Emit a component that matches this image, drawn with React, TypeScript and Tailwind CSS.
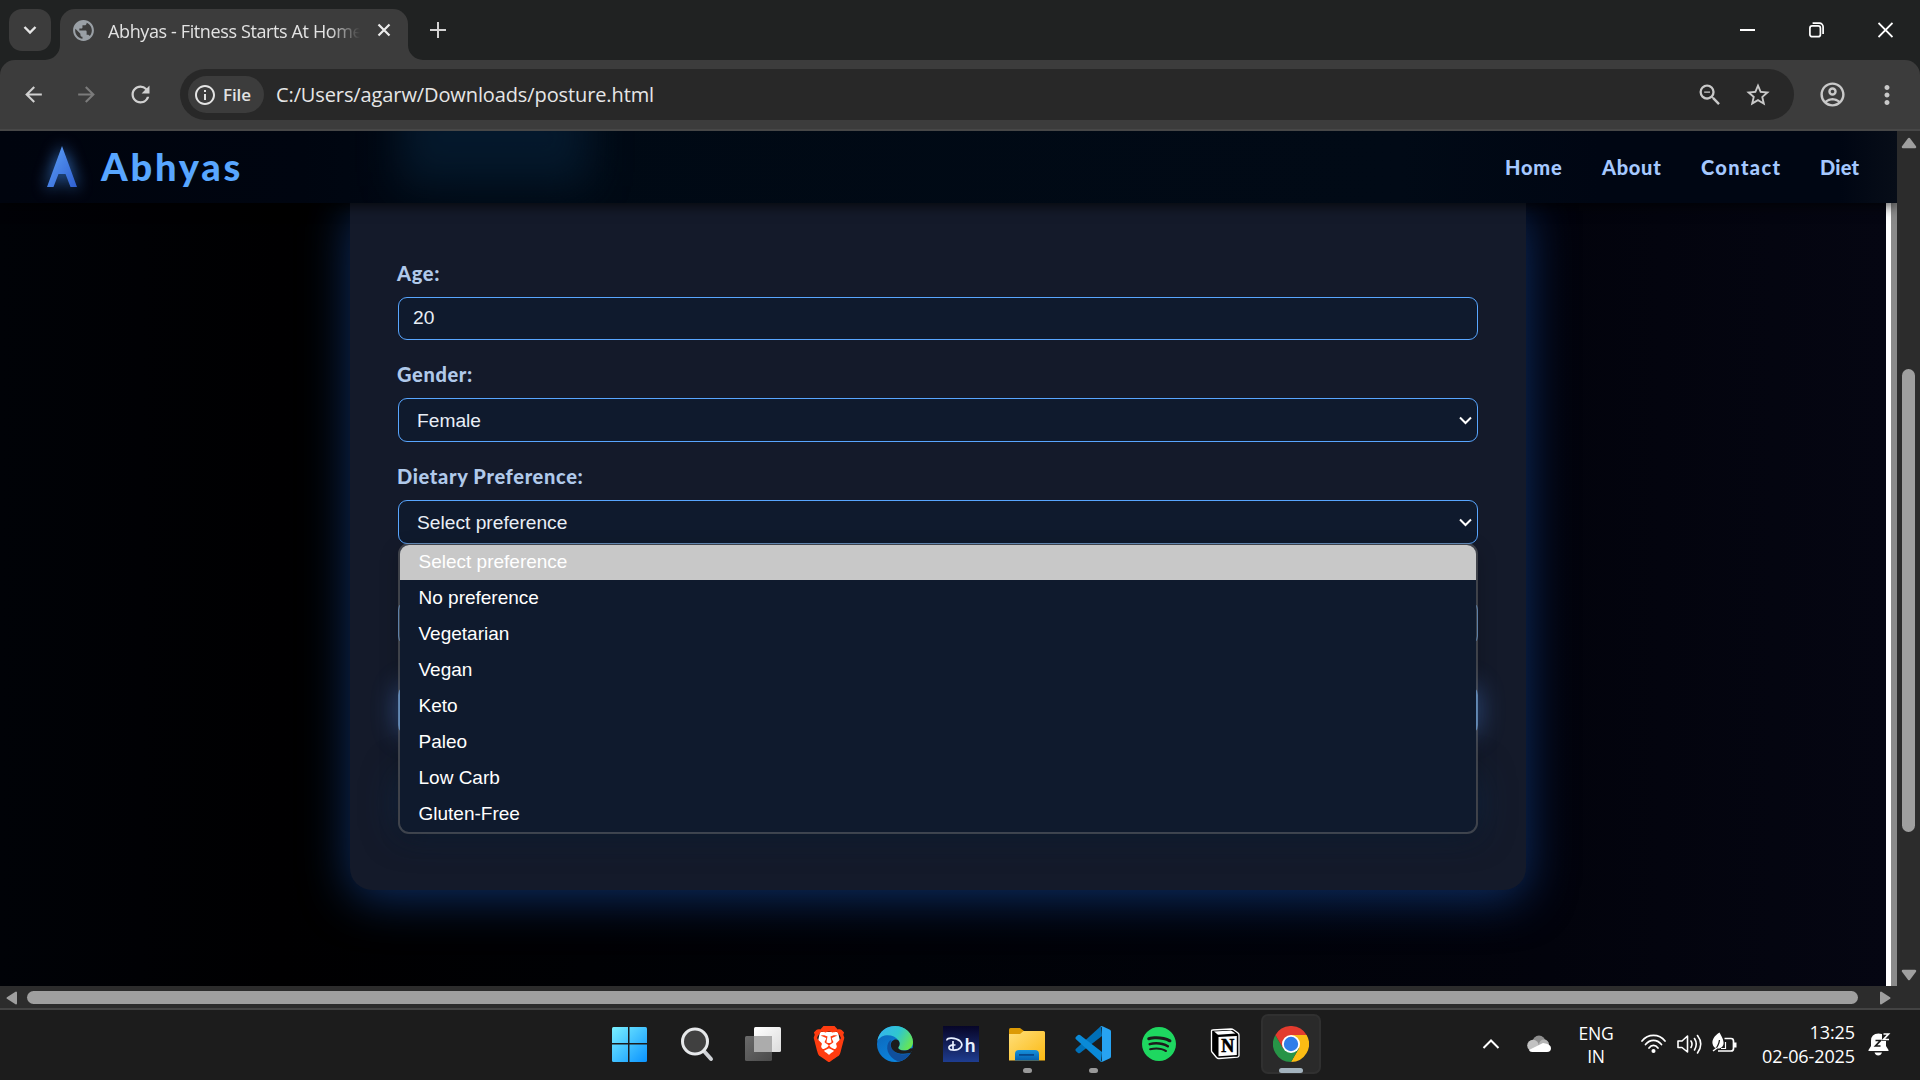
import React from "react";
import {
  MdArrowBack,
  MdArrowForward,
  MdInfoOutline,
  MdMoreVert,
  MdOutlineAccountCircle,
  MdOutlineZoomOut,
  MdPublic,
  MdRefresh,
  MdStarBorder,
} from "react-icons/md";
import { SiBrave, SiSpotify } from "react-icons/si";

const UI = "font-['Open_Sans','Noto_Sans',sans-serif]";
const BRAND = "font-['Lato','Open_Sans',sans-serif]";

function TabStrip() {
  return (
    <div className="flex h-[60px] shrink-0 bg-[#202222] pl-[9px]">
      <button className="mt-[9px] flex h-[42px] w-[42px] items-center justify-center rounded-[13px] bg-[#3c3c3c]">
        <svg width="14" height="10" viewBox="0 0 14 10" fill="none" stroke="#e6e6e6" strokeWidth="2.4">
          <path d="M1.5 2 L7 7.5 L12.500 2" />
        </svg>
      </button>
      <div className="relative mt-[9px] ml-[9px] flex h-[51px] w-[348px] items-center rounded-t-[15px] bg-[#3c3c3c] pl-[12px]">
        <svg className="absolute bottom-0 -left-[15px]" width="15" height="15">
          <path d="M15 0 A15 15 0 0 1 0 15 H15 Z" fill="#3c3c3c" />
        </svg>
        <svg className="absolute -right-[15px] bottom-0" width="15" height="15">
          <path d="M0 0 A15 15 0 0 0 15 15 H0 Z" fill="#3c3c3c" />
        </svg>
        <MdPublic size={25} color="#9aa0a6" className="-mt-[9px] -ml-px" />
        <div
          className={`${UI} -mt-[7px] ml-[12px] w-[252px] overflow-hidden text-[18px] leading-[26px] tracking-[-0.380px] whitespace-nowrap text-[#e3e3e3] [mask-image:linear-gradient(to_right,black_88%,transparent)]`}
        >
          Abhyas - Fitness Starts At Home
        </div>
        <svg className="-mt-[9px] ml-[17px]" width="14" height="14" viewBox="0 0 14 14" stroke="#ececec" strokeWidth="2.2">
          <path d="M1.500 1.500 L12.500 12.500 M12.500 1.500 L1.500 12.500" />
        </svg>
      </div>
      <svg className="mt-[22px] ml-[22px]" width="16" height="16" viewBox="0 0 16 16" stroke="#d3d3d3" strokeWidth="2">
        <path d="M8 0 V16 M0 8 H16" />
      </svg>
      <div className="ml-auto flex h-[59px] items-center pr-[27px]">
        <svg width="15" height="16" viewBox="0 0 15 16" className="mr-[54px]">
          <rect y="7" width="15" height="2" fill="#fff" />
        </svg>
        <svg width="15" height="16" viewBox="0 0 15 16" fill="none" stroke="#fff" strokeWidth="1.700" className="mr-[54px]">
          <rect x="0.900" y="3.900" width="10.500" height="10.800" rx="2.300" />
          <path d="M3.600 1.200 H10.500 A3.600 3.600 0 0 1 14.100 4.800 V12" />
        </svg>
        <svg width="15" height="16" viewBox="0 0 15 16" stroke="#fff" strokeWidth="1.800">
          <path d="M0.500 1 L14.500 15 M14.500 1 L0.500 15" />
        </svg>
      </div>
    </div>
  );
}

function Toolbar() {
  return (
    <div className="h-[71px] shrink-0 bg-[#202222]">
      <div className="flex h-[71px] items-center rounded-t-[15px] border-b-2 border-[#474747] bg-[#3c3c3c] pl-[21px]">
        <MdArrowBack size={25} color="#d0d0d0" />
        <MdArrowForward size={25} color="#7b7b7b" className="ml-[28px]" />
        <MdRefresh size={27} color="#d0d0d0" className="ml-[28px]" />
        <div className="ml-[26px] flex h-[51px] w-[1614px] items-center rounded-full bg-[#282828] pr-[22px] pl-[8px]">
          <div className="flex h-[37px] w-[76px] items-center rounded-full bg-[#3c3c3c] pl-[5px]">
            <MdInfoOutline size={24} color="#e3e3e3" />
            <span className={`${UI} ml-[6px] text-[17px] font-semibold tracking-[-0.100px] text-[#e3e3e3]`}>File</span>
          </div>
          <span className={`${UI} ml-[12px] text-[20px] tracking-[-0.110px] whitespace-nowrap text-[#e6e6e6]`}>
            C:/Users/agarw/Downloads/posture.html
          </span>
          <MdOutlineZoomOut size={28} color="#c9c9c9" className="ml-auto" />
          <MdStarBorder size={28} color="#c9c9c9" className="ml-[20px]" />
        </div>
        <MdOutlineAccountCircle size={29} color="#c9c9c9" className="ml-[24px]" />
        <MdMoreVert size={30} color="#c9c9c9" className="ml-[25px]" />
      </div>
    </div>
  );
}

function SiteHeader() {
  return (
    <header className="relative z-10 flex h-[72px] w-[1897px] shrink-0 items-center bg-[linear-gradient(to_right,#00040e_0px,#000510_300px,#000914_480px,#010a16_1400px,#000613_1600px,#000613_1840px,#070d18_1897px)] pl-[46px] shadow-[0_3px_12px_rgba(0,0,0,0.7)]">
      <div className="absolute top-0 left-0 h-full w-full overflow-hidden">
        <div className="absolute -top-[40px] left-[400px] h-[95px] w-[190px] bg-[linear-gradient(#08203a,#061e32)] opacity-70 blur-[20px]" />
      </div>
      <svg
        width="32"
        height="42"
        viewBox="0 0 32 42"
        className="relative overflow-visible drop-shadow-[0_0_8px_rgba(70,150,255,0.8)]"
      >
        <defs>
          <linearGradient id="mark" x1="0" y1="0" x2="1" y2="1">
            <stop offset="0" stopColor="#5ea2f8" />
            <stop offset="1" stopColor="#2f5fd0" />
          </linearGradient>
        </defs>
        <path d="M16 0 L31 41 H24.500 L19.500 28 H12.500 L7.500 41 H1 Z" fill="url(#mark)" />
      </svg>
      <div className={`${BRAND} relative -mt-[3px] ml-[23px] text-[38px] leading-none font-black tracking-[2.800px] text-[#58a6ff]`}>Abhyas</div>
      <nav className={`${BRAND} relative mr-[38px] ml-auto flex gap-[39px] text-[20px] font-black text-[#a5c8ff]`}>
        <a className="w-[58px] tracking-[0.800px]">Home</a>
        <a className="w-[60px] tracking-[0.700px]">About</a>
        <a className="w-[80px] tracking-[1.400px]">Contact</a>
        <a className="w-[39px] tracking-[0.200px]">Diet</a>
      </nav>
    </header>
  );
}

function Label({ children }: { children: React.ReactNode }) {
  return <div className={`${BRAND} -ml-px mb-[9px] h-[30px] text-[20px] leading-[30px] font-black tracking-[0.660px] text-[#b0c9ea]`}>{children}</div>;
}

function Select({ value, children }: { value: string; children?: React.ReactNode }) {
  return (
    <div className="relative mb-[19px] flex h-[44px] items-center justify-between rounded-[9px] border border-[#58a6ff] bg-[#0f1a2d] pr-[5px] pl-[18px] font-['Liberation_Sans',sans-serif] text-[19.200px] text-[#e8eef6]">
      <span className="relative top-px">{value}</span>
      <svg width="13" height="9" viewBox="0 0 13 9" fill="none" stroke="#fff" strokeWidth="2">
        <path d="M1 1.500 L6.500 7 L12 1.500" />
      </svg>
      {children}
    </div>
  );
}

const OPTIONS = ["Select preference", "No preference", "Vegetarian", "Vegan", "Keto", "Paleo", "Low Carb", "Gluten-Free"];

function OptionMenu() {
  return (
    <div className="absolute top-[42px] -left-px z-10 h-[291px] w-[1080px] overflow-hidden rounded-[11px] border-2 border-[#6b6b6b]/50 bg-[#0f1a2d] bg-clip-padding text-[19px] text-white shadow-[0_6px_20px_rgba(0,0,0,0.2)]">
      {OPTIONS.map((option, i) => (
        <div key={option} className={i === 0 ? "h-[35px] bg-[#c8c8c8] pl-[18.500px] leading-[33px]" : "h-[36px] pl-[18.500px] leading-[35px]"}>
          {option}
        </div>
      ))}
    </div>
  );
}

function Page() {
  return (
    <div className="flex h-[855px] w-[1897px] flex-col overflow-hidden">
      <SiteHeader />
      <div className="flex min-h-0 flex-1">
        <main className="w-[1886px] overflow-hidden bg-[linear-gradient(to_right,#000207_0px,#000001_280px,#000207_900px,#02030c_1550px,#050612_1886px)]">
          <section className="ml-[350px] h-[687px] w-[1176px] rounded-b-[22px] bg-[#141a2a] px-[48px] pt-[55px] shadow-[0_8px_48px_rgba(24,84,180,0.54)]">
            <Label>Age:</Label>
            <div className="mb-[19px] flex h-[43px] items-center rounded-[9px] border border-[#58a6ff] bg-[#0f1a2d] pl-[14px] font-['Liberation_Sans',sans-serif] text-[19.200px] text-[#e8eef6]">
              <span className="relative">20</span>
            </div>
            <Label>Gender:</Label>
            <Select value="Female" />
            <Label>Dietary Preference:</Label>
            <Select value="Select preference">
              <OptionMenu />
            </Select>
            <div className="mt-[57px] h-[44px] rounded-[9px] border border-[#58a6ff] bg-[#0f1a2d]" />
            <div className="mt-[40px] h-[50px] rounded-[10px] bg-[#58a6ff] shadow-[0_0_26px_rgba(88,150,255,0.45)]" />
            <div className="mt-[34px] h-[60px] rounded-[10px] shadow-[0_4px_34px_rgba(16,50,85,0.55)]" />
          </section>
        </main>
        <div className="w-[5px] bg-white" />
        <div className="w-[6px] bg-[#8a8a8a]" />
      </div>
    </div>
  );
}

function VerticalScrollbar() {
  return (
    <div className="flex h-[855px] w-[23px] flex-col items-center bg-[#2c2c2c]">
      <svg className="mt-[6px]" width="16" height="12" viewBox="0 0 16 12">
        <path d="M8 2 L14 10 H2 Z" fill="#9f9f9f" stroke="#9f9f9f" strokeWidth="2.500" strokeLinejoin="round" />
      </svg>
      <div className="mt-[220px] h-[463px] w-[13px] rounded-full bg-[#9f9f9f]" />
      <svg className="mt-[137px]" width="16" height="12" viewBox="0 0 16 12">
        <path d="M8 10 L14 2 H2 Z" fill="#9f9f9f" stroke="#9f9f9f" strokeWidth="2.500" strokeLinejoin="round" />
      </svg>
    </div>
  );
}

function HorizontalScrollbar() {
  return (
    <div className="flex h-[24px] shrink-0 items-center border-b-2 border-[#434343] bg-[#2c2c2c] pt-px pl-[6px]">
      <svg width="12" height="14" viewBox="0 0 12 14">
        <path d="M1.500 7 L10 1.500 V12.500 Z" fill="#9f9f9f" stroke="#9f9f9f" strokeWidth="2" strokeLinejoin="round" />
      </svg>
      <div className="ml-[9px] h-[13px] w-[1831px] rounded-full bg-[#9f9f9f]" />
      <svg className="ml-[21px]" width="12" height="14" viewBox="0 0 12 14">
        <path d="M10.500 7 L2 1.500 V12.500 Z" fill="#9f9f9f" stroke="#9f9f9f" strokeWidth="2" strokeLinejoin="round" />
      </svg>
    </div>
  );
}

function WindowsIcon() {
  return (
    <svg width="36" height="36" viewBox="0 0 36 36">
      <defs>
        <linearGradient id="win" gradientUnits="userSpaceOnUse" x1="0" y1="0" x2="36" y2="36">
          <stop offset="0" stopColor="#7df3ff" />
          <stop offset="1" stopColor="#0a93ff" />
        </linearGradient>
      </defs>
      <g fill="url(#win)">
        <path d="M2.500 1 H17 V17 H1 V2.500 Q1 1 2.500 1Z" />
        <path d="M18.500 1 H34.500 Q36 1 36 2.500 V17 H18.500Z" />
        <path d="M1 18.500 H17 V36 H2.500 Q1 36 1 34.500Z" />
        <path d="M18.500 18.500 H36 V34.500 Q36 36 34.500 36 H18.500Z" />
      </g>
    </svg>
  );
}

function SearchIcon() {
  return (
    <svg width="36" height="36" viewBox="0 0 36 36">
      <path d="M24 24 L32 33" stroke="#cfd2d6" strokeWidth="4" strokeLinecap="round" />
      <circle cx="16" cy="15.500" r="12.500" fill="#404040" stroke="#e6e8ea" strokeWidth="3" />
    </svg>
  );
}

function TaskViewIcon() {
  return (
    <svg width="36" height="36" viewBox="0 0 36 36">
      <defs>
        <linearGradient id="tvf" x1="0" y1="0" x2="1" y2="1">
          <stop offset="0" stopColor="#fff" />
          <stop offset="1" stopColor="#dcdcdc" />
        </linearGradient>
        <linearGradient id="tvb" x1="0" y1="0" x2="1" y2="1">
          <stop offset="0" stopColor="#6a6a6a" />
          <stop offset="1" stopColor="#4a4a4a" />
        </linearGradient>
      </defs>
      <rect x="0" y="10" width="27" height="25" rx="1.500" fill="url(#tvb)" />
      <rect x="9" y="1" width="27" height="25" rx="1.500" fill="url(#tvf)" />
      <path d="M9 10 H27 V26 H9 Z" fill="#acacac" />
    </svg>
  );
}

function BraveIcon() {
  return (
    <div className="relative flex h-[36px] w-[36px] items-center justify-center">
      <svg className="absolute" width="36" height="36" viewBox="0 0 36 36">
        <path d="M9 6 H27 L29 15 L25 26 L18 32 L11 26 L7 15Z" fill="#fff" />
      </svg>
      <SiBrave size={36} color="#ff3c10" className="relative" />
    </div>
  );
}

function EdgeIcon() {
  return (
    <svg width="36" height="36" viewBox="0 0 36 36">
      <defs>
        <linearGradient id="edgeTop" x1="0" y1="0.300" x2="1" y2="0.700">
          <stop offset="0" stopColor="#35b5ee" />
          <stop offset="0.500" stopColor="#2fc6cf" />
          <stop offset="1" stopColor="#6be84a" />
        </linearGradient>
        <linearGradient id="edgeLow" x1="0" y1="0" x2="0.600" y2="1">
          <stop offset="0" stopColor="#0c63b5" />
          <stop offset="1" stopColor="#0b86e0" />
        </linearGradient>
      </defs>
      <circle cx="18" cy="18" r="18" fill="url(#edgeLow)" />
      <path d="M0.300 15 C2 5 10 0 18 0 C28 0 36 7.500 36 16 C36 21 32 24.500 27 24.500 C22.500 24.500 20.500 22.500 21.500 21 C23 19 23 16.500 21.500 14.500 C17 8 5 7 0.300 15Z" fill="url(#edgeTop)" />
      <path d="M13 14.500 C7.500 20 10 31 21 35.500 C27 35 31.500 31 33.500 27 C25 30.500 15 27 13.500 19.500 C13.200 17.500 13.500 16 14.500 14Z" fill="#104f9c" />
      <path d="M21.500 14.500 C18 12 13.500 15 13.800 19.500 C14.500 26 22 29.500 33.500 27 L37 22 L33 22.500 C31 24.500 29 24.500 27 24.500 C22.500 24.500 20.500 22.500 21.500 21 C23 19 23 16.500 21.500 14.500Z" fill="#1c1c1c" />
    </svg>
  );
}

function HotstarIcon() {
  return (
    <div className="relative flex h-[36px] w-[36px] items-center justify-center bg-linear-to-b from-[#070628] to-[#1e3d90] font-['Lato',sans-serif] text-[19px] leading-none text-[#e8f0ff]">
      <svg className="absolute top-0 left-0" width="36" height="36" viewBox="0 0 36 36" fill="none" stroke="#e8f0ff" strokeWidth="1.700">
        <path d="M4 14.500 C3 11 13 11.500 17 15 C21.500 19.500 17 25 9 24 C4 23.500 5 18 12.500 19 M10 15 V25" />
      </svg>
      <span className="pl-[18px] font-bold">h</span>
    </div>
  );
}

function ExplorerIcon() {
  return (
    <svg width="36" height="36" viewBox="0 0 36 36">
      <defs>
        <linearGradient id="fold" x1="0" y1="0" x2="1" y2="1">
          <stop offset="0" stopColor="#ffdf7a" />
          <stop offset="1" stopColor="#fbb912" />
        </linearGradient>
        <linearGradient id="tray" x1="0" y1="0" x2="0" y2="1">
          <stop offset="0" stopColor="#1792dc" />
          <stop offset="1" stopColor="#0460b0" />
        </linearGradient>
      </defs>
      <path d="M0 3.500 Q0 2 1.500 2 H11 L15 5 V10 H0Z" fill="#dc9a05" />
      <path d="M0 8 H11 L14.500 5 H34.500 Q36 5 36 6.500 V34.500 H0Z" fill="url(#fold)" />
      <path d="M6 34.500 V28 Q6 24 10 24 H26 Q30 24 30 28 V34.500Z" fill="url(#tray)" />
      <rect x="10" y="28" width="15" height="1.800" fill="#07498c" />
    </svg>
  );
}

function CodeIcon() {
  return (
    <svg width="36" height="36" viewBox="0 0 36 36">
      <path d="M26 0 L0.700 23 Q0 24 0.800 25 L3 27 Q4 27.500 5 27 L27 10Z" fill="#0070b8" />
      <path d="M26 36 L0.700 13 Q0 12 0.800 11 L3 9 Q4 8.500 5 9 L27 26Z" fill="#0a8ad8" />
      <path d="M25.500 0.500 Q26.500 -0.300 28 0.400 L35 3.800 Q36 4.300 36 5.500 V30.500 Q36 31.700 35 32.200 L28 35.600 Q26.500 36.300 25.500 35.500 Q27 35.500 27 34 V2 Q27 0.500 25.500 0.500Z" fill="#27a3f2" />
    </svg>
  );
}

function NotionIcon() {
  return (
    <svg width="36" height="36" viewBox="0 0 36 36">
      <path d="M4.500 5 Q4.500 4 5.500 4 L24 3 Q25.500 3 26.500 3.700 L31 7 Q32 7.700 32 9 V29.500 Q32 31 30.500 31.200 L12 32.500 Q10.500 32.600 9.500 31.500 L5 26 Q4.500 25.300 4.500 24.500Z" fill="#000" stroke="#fff" strokeWidth="1.300" />
      <path d="M7 5.500 L24 4.400 L28.500 7.500 L11 8.700Z" fill="#fff" />
      <path d="M11.500 11 L29.800 9.900 V29 L11.500 30.300Z" fill="#fff" />
      <text x="20.700" y="26.300" textAnchor="middle" fontSize="18" fontWeight="700" fontFamily="Liberation Serif, serif" fill="#000" stroke="#000" strokeWidth="0.600">
        N
      </text>
    </svg>
  );
}

function ChromeIcon() {
  return (
    <svg width="36" height="36" viewBox="0 0 36 36">
      <path d="M18 18 L2.400 9 A18 18 0 0 1 33.600 9Z" fill="#e33b2e" />
      <path d="M18 9 H33.600 A18 18 0 0 1 18 36 L25.800 22.500Z" fill="#fbbc14" />
      <path d="M25.800 22.500 L18 36 A18 18 0 0 1 2.400 9 L10.200 22.500Z" fill="#279447" />
      <path d="M2.400 9 L10.200 22.500 L18 9Z" fill="#e33b2e" />
      <circle cx="18" cy="18" r="9" fill="#fff" />
      <circle cx="18" cy="18" r="7.200" fill="#2f7de9" />
    </svg>
  );
}

function TaskbarItem({ children, state }: { children: React.ReactNode; state?: "open" | "active" }) {
  return (
    <div
      className={
        state === "active"
          ? "relative mx-[3px] flex h-[60px] w-[60px] items-center justify-center rounded-[7px] border-2 border-[#303030] bg-[#2a2a2a]"
          : "relative mx-[3px] flex h-[60px] w-[60px] items-center justify-center"
      }
    >
      {children}
      {state === "open" && <div className="absolute bottom-[1px] h-[5px] w-[9px] rounded-full bg-[#999]" />}
      {state === "active" && <div className="absolute -bottom-px h-[5px] w-[24px] rounded-full bg-[#a3b3be]" />}
    </div>
  );
}

function Tray() {
  return (
    <div className={`${UI} -mt-[2px] ml-auto flex h-full items-center text-white`}>
      <svg width="18" height="12" viewBox="0 0 18 12" fill="none" stroke="#fff" strokeWidth="2">
        <path d="M1.500 10 L9 2.500 L16.500 10" />
      </svg>
      <svg className="ml-[26px]" width="26" height="18" viewBox="0 0 26 18">
        <circle cx="13" cy="7" r="6.500" fill="#8e8e8e" />
        <circle cx="7" cy="10.500" r="5.800" fill="#c2c2c2" />
        <circle cx="18" cy="9.500" r="5" fill="#b4b4b4" />
        <path d="M3 15 L17 8 Q25 9 25 13 Q25 17 21 17 H6 Q3.500 17 3 15Z" fill="#fff" />
      </svg>
      <div className="mt-px ml-[21px] w-[46px] text-center text-[17.500px] leading-[23px] tracking-[-0.200px]">
        ENG
        <br />
        IN
      </div>
      <svg className="ml-[22px]" width="25" height="20" viewBox="0 0 25 20" fill="none" stroke="#fff" strokeWidth="1.700" strokeLinecap="round">
        <path d="M1 7 C7 -0.500 18 -0.500 24 7" />
        <path d="M4.500 10.500 C9 5 16 5 20.500 10.500" />
        <path d="M8 14 C10.500 10.500 14.500 10.500 17 14" />
        <circle cx="12.500" cy="17" r="1.200" fill="#fff" />
      </svg>
      <svg className="ml-[11px]" width="25" height="20" viewBox="0 0 25 20" fill="none" stroke="#fff" strokeWidth="1.600" strokeLinecap="round" strokeLinejoin="round">
        <path d="M1 7 H5 L10.500 2 V18 L5 13.500 H1Z" />
        <path d="M14 7 Q16 10 14 13.500 M17.500 4.500 Q21 10 17.500 16 M20.500 1.500 Q27 10 20.500 19" />
      </svg>
      <svg className="-mt-[3px] ml-[10px]" width="25" height="22" viewBox="0 0 25 22" fill="none" stroke="#fff" strokeWidth="1.700">
        <path d="M12.500 6.500 H19 Q21.500 6.500 21.500 9 V16.500 Q21.500 19 19 19 H6" />
        <rect x="22" y="10.500" width="2.500" height="5" fill="#fff" stroke="none" />
        <path d="M13.500 10 V16.500 H9" strokeWidth="1.200" />
        <path d="M7.500 0.500 C2 4 0 8 0.500 11.500 C0.800 14.500 3 16.500 6 16.500 C9.500 16.500 12 14 11.500 10 C11 6 9 3.500 7.500 0.500Z" fill="#fff" stroke="none" />
        <path d="M7.500 8 C7 13 5 16 1 20" stroke="#1c1c1c" strokeWidth="1.300" />
        <path d="M1 19 L5 16" strokeWidth="1.500" />
      </svg>
      <div className="ml-[14px] w-[104px] text-right text-[18px] leading-[24px] tracking-[-0.100px] whitespace-nowrap">
        13:25
        <br />
        02-06-2025
      </div>
      <svg className="mr-[29px] ml-[13px]" width="23" height="24" viewBox="0 0 23 24">
        <path d="M3 9 Q3 1.500 10.500 1.500 Q18 1.500 18 9 V14 L20.500 18 V19 H0.500 V18 L3 14Z" fill="#fff" />
        <path d="M6.500 20.500 H14 Q13 23.500 10.200 23.500 Q7.500 23.500 6.500 20.500Z" fill="#fff" />
        <path d="M7.500 8.500 H12.500 L7.500 14 H12.500" fill="none" stroke="#1c1c1c" strokeWidth="1.700" />
        <path d="M14 1 H23 V9 H14Z" fill="#1c1c1c" />
        <path d="M15.500 2 H20.500 L15.500 7.500 H21" fill="none" stroke="#fff" strokeWidth="1.700" />
      </svg>
    </div>
  );
}

function Taskbar() {
  return (
    <div className="grid h-[70px] shrink-0 grid-cols-[598px_726px_1fr] items-center bg-[#1c1c1c]">
      <div />
      <div className="-mt-[2px] flex">
        <div className="-ml-[2px] mr-[2px]"><TaskbarItem><WindowsIcon /></TaskbarItem></div>
        <TaskbarItem><SearchIcon /></TaskbarItem>
        <TaskbarItem><TaskViewIcon /></TaskbarItem>
        <TaskbarItem><BraveIcon /></TaskbarItem>
        <TaskbarItem><EdgeIcon /></TaskbarItem>
        <TaskbarItem><HotstarIcon /></TaskbarItem>
        <TaskbarItem state="open"><ExplorerIcon /></TaskbarItem>
        <TaskbarItem state="open"><CodeIcon /></TaskbarItem>
        <TaskbarItem><SiSpotify size={34} color="#1ed760" /></TaskbarItem>
        <TaskbarItem><NotionIcon /></TaskbarItem>
        <TaskbarItem state="active"><ChromeIcon /></TaskbarItem>
      </div>
      <Tray />
    </div>
  );
}

export default function App() {
  return (
    <div className="flex h-[1080px] w-[1920px] flex-col overflow-hidden bg-[#1c1c1c]">
      <TabStrip />
      <Toolbar />
      <div className="flex h-[855px] shrink-0">
        <Page />
        <VerticalScrollbar />
      </div>
      <HorizontalScrollbar />
      <Taskbar />
    </div>
  );
}
